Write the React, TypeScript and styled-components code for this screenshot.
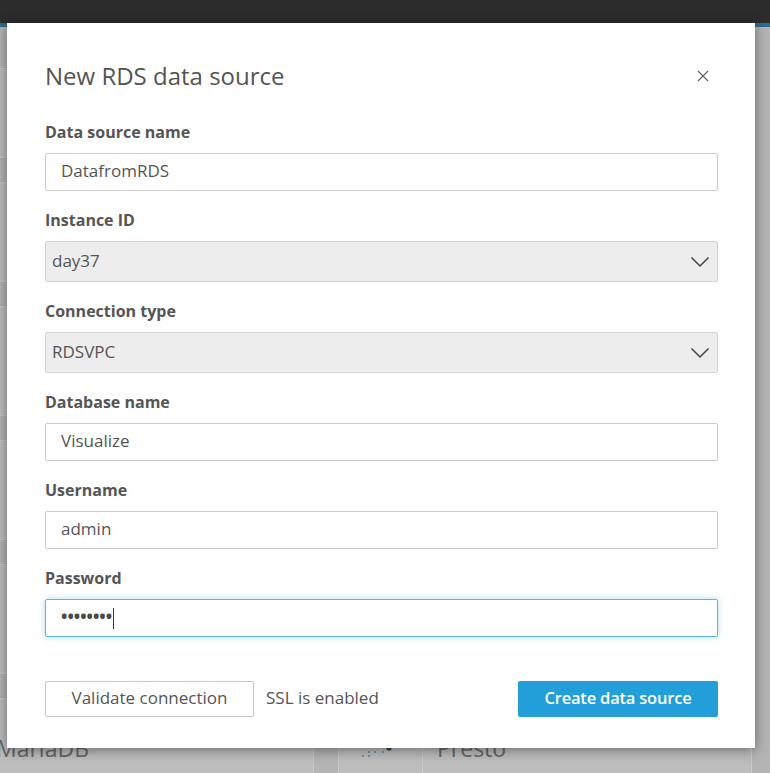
import React from "react";
import styled, { createGlobalStyle } from "styled-components";

const GlobalStyle = createGlobalStyle`
  html, body { margin: 0; padding: 0; }
  body {
    font-family: "Open Sans", "Noto Sans", "Liberation Sans", sans-serif;
    background: #b4b4b4;
  }
  * { box-sizing: border-box; }
`;

const Page = styled.div`
  position: relative;
  width: 770px;
  height: 773px;
  overflow: hidden;
  background: #b4b4b4;
`;

const TopBar = styled.div`
  height: 23px;
  background: #2c2c2c;
`;

const AccentStrip = styled.div`
  height: 4px;
  background: #2c6c88;
`;

const Backdrop = styled.div`
  display: grid;
  grid-template-columns: 330px 414px;
  column-gap: 24px;
  margin-left: -16px;
  padding-top: 41px;
`;

const BgColumn = styled.div`
  display: flex;
  flex-direction: column;
  gap: 24px;
`;

const BgCard = styled.div<{ $h: number }>`
  height: ${(p) => p.$h}px;
  background: #bdbdbd;
  border: 1px solid #cacaca;
  display: flex;
  align-items: center;
  padding-left: 11px;
  font-size: 23px;
  color: #666;
`;

const BgIcon = styled.div`
  width: 84px;
  margin-left: -11px;
  align-self: stretch;
  border-right: 1px solid #cacaca;
  display: flex;
  align-items: center;
  justify-content: center;
`;

const BgLabel = styled.span<{ $pad?: number }>`
  padding-left: ${(p) => p.$pad ?? 0}px;
`;

const Modal = styled.div`
  position: absolute;
  left: 7px;
  top: 23px;
  width: 748px;
  height: 725px;
  background: #fff;
  box-shadow: 0 2px 12px rgba(0, 0, 0, 0.45);
  padding: 37px 37px 0 38px;
  display: flex;
  flex-direction: column;
`;

const Header = styled.div`
  display: flex;
  justify-content: space-between;
  align-items: flex-start;
  margin-bottom: 30px;
`;

const Title = styled.h2`
  margin: 0;
  font-size: 24px;
  line-height: 32px;
  font-weight: 400;
  color: #545454;
`;

const CloseButton = styled.button`
  border: 0;
  background: transparent;
  padding: 0;
  margin: 10px 9px 0 0;
  width: 12px;
  height: 12px;
  display: flex;
  cursor: pointer;
`;

const Form = styled.div`
  display: flex;
  flex-direction: column;
  gap: 19px;
`;

const Group = styled.div`
  display: flex;
  flex-direction: column;
`;

const Label = styled.label`
  font-size: 16px;
  line-height: 20px;
  font-weight: 700;
  color: #555;
  margin-bottom: 11px;
`;

const TextField = styled.div<{ $focused?: boolean }>`
  height: 38px;
  border: 1px solid ${(p) => (p.$focused ? "#62b5cf" : "#cbcbcb")};
  border-radius: 2px;
  background: #fff;
  padding: 0 15px 3px;
  display: flex;
  align-items: center;
  font-size: 17px;
  color: #555;
  box-shadow: ${(p) => (p.$focused ? "0 0 6px rgba(80, 170, 220, 0.45)" : "none")};
`;

const SelectField = styled.div`
  height: 41px;
  border: 1px solid #d4d4d4;
  border-radius: 2px;
  background: #ededed;
  padding: 0 7px 3px 6px;
  display: flex;
  align-items: center;
  justify-content: space-between;
  font-size: 17px;
  color: #555;
`;

const ChevronBox = styled.span`
  display: flex;
  margin-top: 3px;
`;

const Dots = styled.span`
  color: #4a4a4a;
  font-weight: 700;
`;

const Caret = styled.span`
  display: inline-block;
  width: 1px;
  height: 21px;
  background: #333;
  margin: 3px 0 0 1px;
`;

const Footer = styled.div`
  display: flex;
  align-items: center;
  margin-top: 44px;
`;

const SecondaryButton = styled.button`
  height: 36px;
  width: 209px;
  border: 1px solid #c8c8c8;
  border-radius: 2px;
  background: #fff;
  font-family: inherit;
  font-size: 17px;
  color: #555;
  padding: 0 0 3px;
  cursor: pointer;
`;

const SslNote = styled.span`
  margin: 0 0 3px 12px;
  font-size: 17px;
  color: #555;
`;

const PrimaryButton = styled.button`
  margin-left: auto;
  height: 36px;
  width: 200px;
  border: 0;
  border-radius: 2px;
  background: #229fd8;
  font-family: inherit;
  font-size: 16.5px;
  font-weight: 600;
  letter-spacing: -0.2px;
  color: #fff;
  padding: 0 0 3px;
  cursor: pointer;
`;

const Chevron = () => (
  <svg width="20" height="12" viewBox="0 0 20 12" fill="none">
    <path d="M1.5 1.5 L10 10 L18.5 1.5" stroke="#444" strokeWidth="1.5" />
  </svg>
);

const CloseIcon = () => (
  <svg width="12" height="12" viewBox="0 0 12 12" fill="none">
    <path d="M1 1 L11 11 M11 1 L1 11" stroke="#666" strokeWidth="1.3" />
  </svg>
);

const PrestoDots = () => (
  <svg width="40" height="24" viewBox="0 0 40 24">
    {[
      [22, 4, 1.8], [28, 4, 1.8], [14, 8, 1], [20, 10, 1], [28, 12, 2.6],
      [8, 16, 1], [14, 16, 1], [22, 16, 1], [2, 20, 1], [8, 20, 1],
    ].map(([x, y, r], i) => (
      <circle key={i} cx={x} cy={y} r={r} fill={r > 1.5 ? "#224a58" : "#5b8d96"} />
    ))}
  </svg>
);

export default function App() {
  return (
    <>
      <GlobalStyle />
      <Page>
        <TopBar />
        <AccentStrip />
        <Backdrop aria-hidden="true">
          <BgColumn>
            <BgCard $h={90} />
            <BgCard $h={100} />
            <BgCard $h={110} />
            <BgCard $h={100} />
            <BgCard $h={110} />
            <BgCard $h={100}><BgLabel>MariaDB</BgLabel></BgCard>
          </BgColumn>
          <BgColumn>
            <BgCard $h={90} />
            <BgCard $h={100} />
            <BgCard $h={110} />
            <BgCard $h={100} />
            <BgCard $h={110} />
            <BgCard $h={100}>
              <BgIcon><PrestoDots /></BgIcon>
              <BgLabel $pad={14}>Presto</BgLabel>
            </BgCard>
          </BgColumn>
        </Backdrop>

        <Modal role="dialog" aria-label="New RDS data source">
          <Header>
            <Title>New RDS data source</Title>
            <CloseButton aria-label="Close"><CloseIcon /></CloseButton>
          </Header>
          <Form>
            <Group>
              <Label>Data source name</Label>
              <TextField>DatafromRDS</TextField>
            </Group>
            <Group>
              <Label>Instance ID</Label>
              <SelectField>day37<ChevronBox><Chevron /></ChevronBox></SelectField>
            </Group>
            <Group>
              <Label>Connection type</Label>
              <SelectField>RDSVPC<ChevronBox><Chevron /></ChevronBox></SelectField>
            </Group>
            <Group>
              <Label>Database name</Label>
              <TextField>Visualize</TextField>
            </Group>
            <Group>
              <Label>Username</Label>
              <TextField>admin</TextField>
            </Group>
            <Group>
              <Label>Password</Label>
              <TextField $focused>
                <Dots>••••••••</Dots>
                <Caret />
              </TextField>
            </Group>
          </Form>
          <Footer>
            <SecondaryButton>Validate connection</SecondaryButton>
            <SslNote>SSL is enabled</SslNote>
            <PrimaryButton>Create data source</PrimaryButton>
          </Footer>
        </Modal>
      </Page>
    </>
  );
}
